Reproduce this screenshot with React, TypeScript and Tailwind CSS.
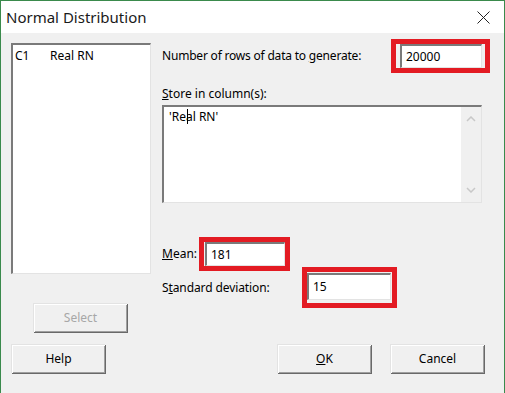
import React from "react";

const font = { fontFamily: '"Noto Sans", "Open Sans", sans-serif' };

function Btn({ children, disabled }: { children: React.ReactNode; disabled?: boolean }) {
  return (
    <div
      className={`w-[94px] h-[29px] flex items-center justify-center bg-[#f0f0f0] text-[12px] border-t border-l border-[#e3e3e3] shadow-[inset_1px_1px_0_#ffffff,inset_-1px_-1px_0_#a0a0a0,1px_1px_0_#696969] ${
        disabled ? "text-[#a7a7a7]" : "text-black"
      }`}
    >
      {children}
    </div>
  );
}

function Field({ value, w, h }: { value: string; w: string; h: string }) {
  return (
    <div
      className={`${w} ${h} bg-white border-t-2 border-l-2 border-t-[#7a7a7a] border-l-[#7a7a7a] border-r border-b border-r-[#e3e3e3] border-b-[#e3e3e3] flex items-center pl-[4px] text-[12px] text-black`}
    >
      {value}
    </div>
  );
}

export default function App() {
  return (
    <div
      className="w-[505px] h-[393px] bg-[#f0f0f0] border-l border-t border-r border-[#3a8a4c] flex flex-col overflow-hidden"
      style={font}
    >
      {/* Title bar */}
      <div className="h-[32px] bg-white flex items-center justify-between pl-[5px] pr-[14px] shrink-0">
        <span className="text-[15px] text-[#1a1a1a]">Normal Distribution</span>
        <svg width="13" height="13" viewBox="0 0 13 13">
          <path d="M0.5 0.5 L12.5 12.5 M12.5 0.5 L0.5 12.5" stroke="#222" strokeWidth="1" fill="none" />
        </svg>
      </div>

      {/* Body */}
      <div className="flex pt-[6px] pl-[10px]">
        {/* Left column */}
        <div className="flex flex-col items-center mt-[4px] w-[140px]">
          <div className="w-[140px] h-[231px] bg-white border-t-2 border-l-2 border-t-[#7a7a7a] border-l-[#7a7a7a] border-r border-b border-r-[#e3e3e3] border-b-[#e3e3e3] pt-[3px] pl-[2px] text-[12px] text-black leading-[16px]">
            <div className="flex">
              <span className="w-[35px]">C1</span>
              <span>Real RN</span>
            </div>
          </div>
          <div className="mt-[29px] -ml-[2px]">
            <Btn disabled>Select</Btn>
          </div>
        </div>

        {/* Right column */}
        <div className="flex flex-col ml-[11px] text-[12px] text-black">
          <div className="flex items-center h-[34px]">
            <span className="w-[229px] tracking-[-0.2px]">
              Number of rows of data to <span className="underline">g</span>enerate:
            </span>
            <div className="border-[5px] border-[#e31b23] pl-[4px] pr-[3px]">
              <Field value="20000" w="w-[82px]" h="h-[24px]" />
            </div>
          </div>

          <div className="mt-[13px] leading-[16px]">
            <span className="underline">S</span>tore in column(s):
          </div>

          <div className="mt-[3px] w-[320px] h-[98px] bg-white border-t-2 border-l-2 border-t-[#7a7a7a] border-l-[#7a7a7a] border-r border-b border-r-[#e3e3e3] border-b-[#e3e3e3] flex">
            <div className="flex-1 pl-[5px] pt-[2px] leading-[16px]">
              <span className="relative">
                'Real RN'
                <span className="absolute left-[18px] top-[1px] w-px h-[15px] bg-black"></span>
              </span>
            </div>
            <div className="w-[20px] bg-[#f0f0f0] flex flex-col items-center justify-between py-[9px]">
              <svg width="10" height="6" viewBox="0 0 10 6">
                <path d="M1 5 L5 1 L9 5" stroke="#c8c8c8" strokeWidth="1.5" fill="none" />
              </svg>
              <svg width="10" height="6" viewBox="0 0 10 6">
                <path d="M1 1 L5 5 L9 1" stroke="#c8c8c8" strokeWidth="1.5" fill="none" />
              </svg>
            </div>
          </div>

          <div className="mt-[34px] flex items-center h-[34px]">
            <span className="w-[37px]">
              <span className="underline">M</span>ean:
            </span>
            <div className="border-[5px] border-[#e31b23] pl-px">
              <Field value="181" w="w-[80px]" h="h-[24px]" />
            </div>
          </div>

          <div className="-mt-[4px] flex items-center h-[41px]">
            <span className="w-[140px] tracking-[-0.1px]">
              S<span className="underline">t</span>andard deviation:
            </span>
            <div className="border-[5px] border-[#e31b23] pt-px pb-[3px] pr-px">
              <Field value="15" w="w-[84px]" h="h-[27px]" />
            </div>
          </div>
        </div>
      </div>

      {/* Bottom buttons */}
      <div className="flex items-center mt-[12px] pl-[10px]">
        <Btn>Help</Btn>
        <div className="ml-[172px]">
          <Btn>
            <span>
              <span className="underline">O</span>K
            </span>
          </Btn>
        </div>
        <div className="ml-[19px]">
          <Btn>Cancel</Btn>
        </div>
      </div>
    </div>
  );
}
